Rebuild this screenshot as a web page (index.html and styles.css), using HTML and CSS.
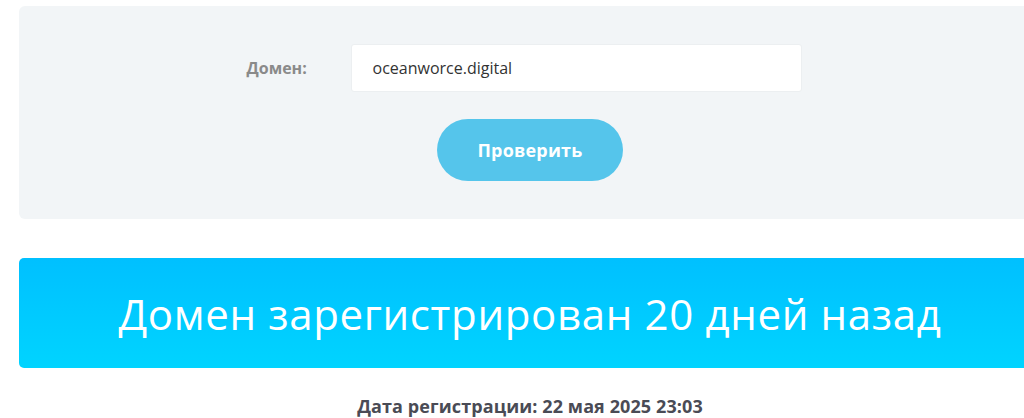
FILE: index.html
```html
<!DOCTYPE html>
<html lang="ru">
<head>
<meta charset="utf-8">
<title>Проверка домена</title>
<link rel="stylesheet" href="styles.css">
</head>
<body>
<div class="page">
  <section class="panel">
    <form class="form">
      <div class="row">
        <label class="label" for="domain">Домен:</label>
        <div class="input">oceanworce.digital</div>
      </div>
      <div class="actions">
        <button type="button" class="btn">Проверить</button>
      </div>
    </form>
  </section>
  <section class="result">
    <h1 class="result-title">Домен зарегистрирован 20 дней назад</h1>
  </section>
  <p class="date">Дата регистрации: 22 мая 2025 23:03</p>
</div>
</body>
</html>
```
FILE: styles.css
```css
html, body {
  margin: 0;
  padding: 0;
  overflow: hidden;
  background: #fff;
}
body {
  font-family: "Open Sans", "DejaVu Sans", sans-serif;
}
.page {
  width: 1022px;
  margin-left: 19px;
  padding-top: 6px;
}
.panel {
  background: #f2f5f7;
  border-radius: 6px;
  height: 213px;
  box-sizing: border-box;
  padding-top: 38px;
}
.form {
  display: flex;
  flex-direction: column;
  align-items: center;
}
.row {
  display: flex;
  align-items: center;
  margin-left: -13px;
}
.label {
  width: 105px;
  font-size: 16px;
  font-weight: 700;
  color: #8a8a8a;
  padding-left: 1px;
  box-sizing: border-box;
}
.input {
  width: 451px;
  height: 48px;
  box-sizing: border-box;
  background: #fff;
  border: 1px solid #eceff1;
  border-radius: 3px;
  padding: 0 21px;
  display: flex;
  align-items: center;
  font-family: "Open Sans", sans-serif;
  font-size: 16px;
  color: #333;
}
.actions {
  margin-top: 27px;
}
.btn {
  width: 186px;
  height: 62px;
  border: 0;
  border-radius: 31px;
  background: #55c5eb;
  color: #fff;
  font-family: "Open Sans", sans-serif;
  font-weight: 700;
  font-size: 18px;
  letter-spacing: 0.2px;
  cursor: pointer;
}
.result {
  margin-top: 39px;
  height: 110px;
  border-radius: 5px;
  background: linear-gradient(to bottom, #00c0ff, #00d4ff);
  display: flex;
  align-items: center;
  justify-content: center;
}
.result-title {
  margin: 0;
  color: #fff;
  font-weight: 400;
  font-size: 42px;
  letter-spacing: 0.65px;
}
.date {
  margin: 26px 0 0;
  text-align: center;
  font-size: 18px;
  font-weight: 700;
  letter-spacing: 0.1px;
  color: #4a4b55;
}
```
